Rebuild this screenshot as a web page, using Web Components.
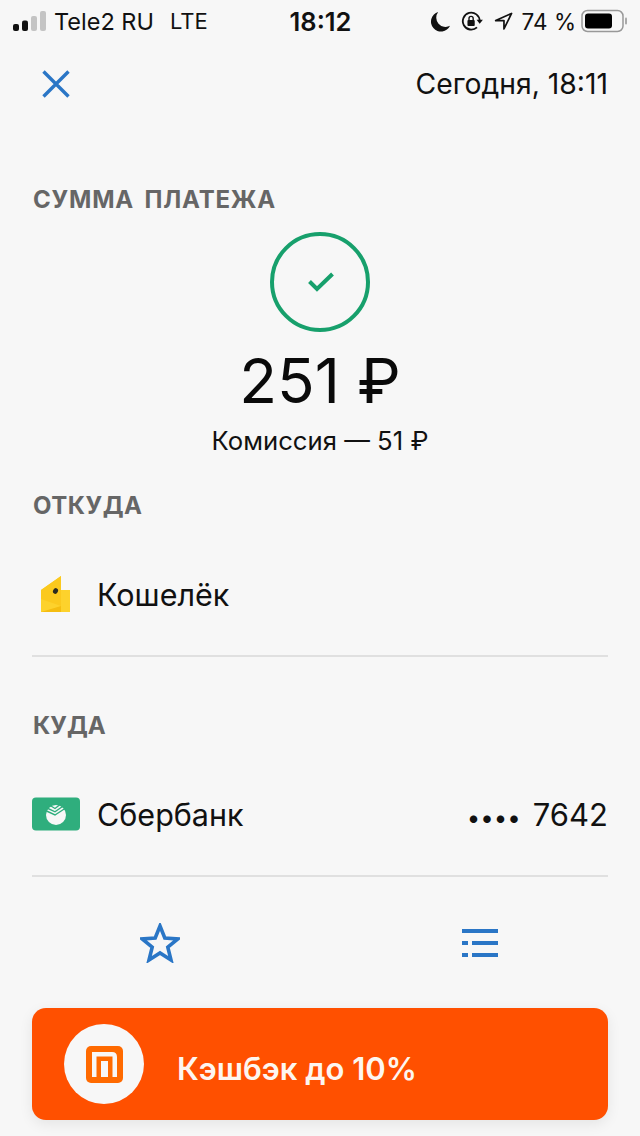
<!DOCTYPE html>
<html lang="ru">
<head>
<meta charset="utf-8">
<title>Платёж</title>
<style>
html, body {
    margin: 0;
    padding: 0;
    background: #f7f7f7;
}
body {
    font-family: Inter, "Noto Sans", sans-serif;
    color: #000;
}
</style>
</head>
<body>
<payment-screen>
    <status-bar></status-bar>
    <top-bar>Сегодня, 18:11</top-bar>
    <section-label style="--label-top:59px;--label-spacing:.8px">СУММА ПЛАТЕЖА</section-label>
    <payment-hero amount="251 ₽" fee="Комиссия — 51 ₽"></payment-hero>
    <section-label style="--label-top:35px">ОТКУДА</section-label>
    <account-row name="Кошелёк" style="--row-top:43px">
        <svg slot="icon" width="48" height="48" viewBox="0 0 48 48">
            <path d="M9 20 29 6V20H38V42H9Z" fill="#fdd22c"/>
            <path d="M9 20 29 6V36L9 29Z" fill="#fbc91e"/>
            <path d="M9 42 29 36V42Z" fill="#f5bd10"/>
            <ellipse cx="23.500" cy="21" rx="2.400" ry="2.900" transform="rotate(30 23.500 21)" fill="#2a2a20"/>
        </svg>
    </account-row>
    <section-label style="--label-top:54px;--label-spacing:0">КУДА</section-label>
    <account-row name="Сбербанк" mask="••••" value="7642" style="--row-top:43px">
        <svg slot="icon" width="48" height="34" viewBox="0 0 48 34">
            <rect width="48" height="33" y="0.500" rx="4" fill="#2fae7d"/>
            <circle cx="24" cy="18" r="10" fill="#f7f7f7"/>
            <path d="M13.500 13.500 23 18 34.500 10.500M14 10.500 23 14.800 32 8.500M16.500 7.500 23 11.500 29.500 6.500" stroke="#2fae7d" stroke-width="1.400" fill="none"/>
        </svg>
    </account-row>
    <action-bar></action-bar>
    <cashback-banner>Кэшбэк до 10%</cashback-banner>
</payment-screen>
<script>
class PaymentScreen extends HTMLElement {
    constructor() {
        super();
        this.attachShadow({ mode: 'open' }).innerHTML = `
<style>
:host {
    display: flex;
    flex-direction: column;
    width: 640px;
    height: 1136px;
    box-sizing: border-box;
    overflow: hidden;
    background: #f7f7f7;
}
</style>
<slot></slot>`;
    }
}
customElements.define('payment-screen', PaymentScreen);

class StatusBar extends HTMLElement {
    constructor() {
        super();
        this.attachShadow({ mode: 'open' }).innerHTML = `
<style>
:host {
    display: grid;
    grid-template-columns: 1fr auto 1fr;
    align-items: center;
    height: 42px;
    padding: 0 12px 0 13px;
    font-size: 23.500px;
    color: #111;
}
.left, .right { display: flex; align-items: center; }
.left { gap: 7px; }
.right { justify-content: flex-end; }
.time { font-weight: 600; font-size: 25.500px; }
.lte { margin-left: 9px; font-size: 22px; }
.battery-text { font-size: 22.500px; margin-right: 5px; }
svg { display: block; }
</style>
<div class="left">
    <svg width="34" height="20" viewBox="0 0 34 20">
        <rect x="0" y="13" width="6" height="7" rx="2" fill="#111"/>
        <rect x="9" y="9.500" width="6" height="10.500" rx="2" fill="#111"/>
        <rect x="18" y="5" width="6" height="15" rx="2" fill="#c4c4c4"/>
        <rect x="27" y="0" width="6" height="20" rx="2" fill="#c4c4c4"/>
    </svg>
    <span>Tele2 RU</span><span class="lte">LTE</span>
</div>
<div class="time">18:12</div>
<div class="right">
    <svg width="20" height="21" viewBox="0 0 21 22" style="margin-right:10px">
        <path d="M7.500 1A10.500 10.500 0 1 0 20 15.500 9.800 9.800 0 0 1 7.500 1Z" fill="#111"/>
    </svg>
    <svg width="22" height="20" viewBox="0 0 24 22" style="margin-right:11px">
        <path d="M20.500 11A9.300 9.300 0 1 0 17.500 18" fill="none" stroke="#111" stroke-width="2"/>
        <path d="M17 9.500H24L20.500 14Z" fill="#111"/>
        <rect x="7" y="10" width="8" height="6.500" rx="1" fill="#111"/>
        <path d="M8.700 10V8.200A2.300 2.300 0 0 1 13.300 8.200V10" fill="none" stroke="#111" stroke-width="1.500"/>
    </svg>
    <svg width="19" height="19" viewBox="0 0 20 20" style="margin-right:9px">
        <path d="M18.500 1.500 1.800 9H10.500V17.800Z" fill="none" stroke="#111" stroke-width="1.800" stroke-linejoin="round"/>
    </svg>
    <span class="battery-text">74 %</span>
    <svg width="47" height="24" viewBox="0 0 47 24">
        <rect x="1" y="1.500" width="41" height="21" rx="5.500" fill="none" stroke="#999" stroke-width="1.500"/>
        <rect x="4" y="4.500" width="27" height="15" rx="3" fill="#000"/>
        <rect x="44" y="8.500" width="2" height="7" rx="1" fill="#aaa"/>
    </svg>
</div>`;
    }
}
customElements.define('status-bar', StatusBar);

class TopBar extends HTMLElement {
    constructor() {
        super();
        this.attachShadow({ mode: 'open' }).innerHTML = `
<style>
:host {
    display: flex;
    align-items: center;
    justify-content: space-between;
    height: 84px;
    padding: 0 32px 0 42px;
    font-size: 28.300px;
    color: #111;
}
svg { display: block; }
</style>
<svg width="28" height="28" viewBox="0 0 28 28">
    <path d="M1.500 1.500 26.500 26.500M26.500 1.500 1.500 26.500" stroke="#2a76c6" stroke-width="3.400" fill="none"/>
</svg>
<span><slot></slot></span>`;
    }
}
customElements.define('top-bar', TopBar);

class SectionLabel extends HTMLElement {
    constructor() {
        super();
        this.attachShadow({ mode: 'open' }).innerHTML = `
<style>
:host {
    display: block;
    padding: var(--label-top, 0) 33px 0;
    font-size: 24px;
    line-height: 30px;
    font-weight: 700;
    letter-spacing: var(--label-spacing, .5px);
    word-spacing: 4px;
    color: #666;
}
</style>
<slot></slot>`;
    }
}
customElements.define('section-label', SectionLabel);

class PaymentHero extends HTMLElement {
    connectedCallback() {
        this.attachShadow({ mode: 'open' }).innerHTML = `
<style>
:host {
    display: flex;
    flex-direction: column;
    align-items: center;
    padding-top: 17px;
}
svg { display: block; }
.amount { font-size: 62px; line-height: 78px; margin-top: 10px; color: #0a0a0a; }
.fee { font-size: 25.700px; line-height: 30px; margin-top: 6px; color: #111; }
</style>
<svg width="100" height="100" viewBox="0 0 100 100">
    <circle cx="50" cy="50" r="48" fill="none" stroke="#17a06c" stroke-width="4"/>
    <path d="M39.500 49.500 47 57 62.500 42" fill="none" stroke="#17a06c" stroke-width="4"/>
</svg>
<div class="amount">${this.getAttribute('amount')}</div>
<div class="fee">${this.getAttribute('fee')}</div>`;
    }
}
customElements.define('payment-hero', PaymentHero);

class AccountRow extends HTMLElement {
    connectedCallback() {
        const value = this.getAttribute('value');
        this.attachShadow({ mode: 'open' }).innerHTML = `
<style>
:host {
    display: block;
    padding: var(--row-top, 0) 32px 0;
}
.row {
    display: flex;
    align-items: center;
    height: 60px;
    padding-bottom: 31px;
    border-bottom: 2px solid #e0e0e0;
    font-size: 30.500px;
    color: #111;
}
.icon { display: flex; align-items: center; justify-content: center; width: 48px; height: 48px; margin-right: 17px; }
.name { flex: 1; }
.value { display: flex; align-items: baseline; gap: 12px; font-size: 31px; }
.mask { font-size: 24px; }
</style>
<div class="row">
    <div class="icon"><slot name="icon"></slot></div>
    <div class="name">${this.getAttribute('name')}</div>
    ${value ? `<div class="value"><span class="mask">${this.getAttribute('mask')}</span><span>${value}</span></div>` : ''}
</div>`;
    }
}
customElements.define('account-row', AccountRow);

class ActionBar extends HTMLElement {
    constructor() {
        super();
        this.attachShadow({ mode: 'open' }).innerHTML = `
<style>
:host {
    display: grid;
    grid-template-columns: 1fr 1fr;
    height: 131px;
    box-sizing: border-box;
}
.cell { display: flex; justify-content: center; padding-top: 46px; }
svg { display: block; }
</style>
<div class="cell">
    <svg width="40" height="40" viewBox="0 0 40 40">
        <path d="M20 3 24.800 15 37.800 15.900 27.800 24.200 31 37 20 30 9 37 12.200 24.200 2.200 15.900 15.200 15Z" fill="none" stroke="#2a76c6" stroke-width="3.600"/>
    </svg>
</div>
<div class="cell">
    <svg width="36" height="28" viewBox="0 0 36 28" style="margin:6px 0 0 0">
        <path d="M0 0H36V4H0ZM0 12H6V16H0ZM10 12H36V16H10ZM0 24H6V28H0ZM10 24H36V28H10Z" fill="#2a76c6"/>
    </svg>
</div>`;
    }
}
customElements.define('action-bar', ActionBar);

class CashbackBanner extends HTMLElement {
    constructor() {
        super();
        this.attachShadow({ mode: 'open' }).innerHTML = `
<style>
:host {
    display: flex;
    align-items: flex-start;
    height: 112px;
    margin: 0 32px;
    padding: 16px 0 0 32px;
    box-sizing: border-box;
    border-radius: 14px;
    background: #ff5000;
    color: #fdf6f0;
    box-shadow: 0 4px 14px rgba(0,0,0,.08);
}
.logo {
    display: flex;
    align-items: center;
    justify-content: center;
    width: 80px;
    height: 80px;
    border-radius: 50%;
    background: #f7f7f7;
}
.text {
    margin: 27px 0 0 33px;
    font-size: 31px;
    line-height: 36px;
    font-weight: 600;
}
svg { display: block; }
</style>
<div class="logo">
    <svg width="37" height="37" viewBox="0 0 37 37">
        <rect width="37" height="37" rx="5" fill="#ff6a00"/>
        <path d="M6 31V6H26Q31 6 31 11V31H26.500V10.500H10.500V31ZM15 31V15H22V31Z" fill="#f7f7f7"/>
    </svg>
</div>
<div class="text"><slot></slot></div>`;
    }
}
customElements.define('cashback-banner', CashbackBanner);
</script>
</body>
</html>
